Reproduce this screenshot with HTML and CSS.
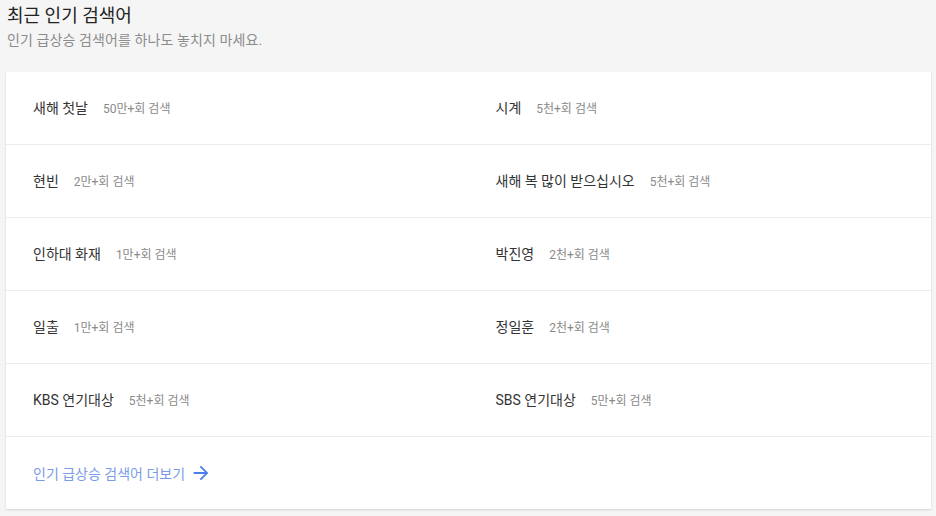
FILE: index.html
```html
<!DOCTYPE html>
<html lang="ko">
<head>
    <meta charset="UTF-8">
    <meta name="viewport" content="width=device-width, initial-scale=1.0">
    <title>최근 인기 검색어</title>
    <link rel="stylesheet" href="styles.css">
</head>
<body>
    <header class="page-head">
        <h1>최근 인기 검색어</h1>
        <p>인기 급상승 검색어를 하나도 놓치지 마세요.</p>
    </header>
    <section class="card">
        <ul class="trend-list">
            <li><span class="term">새해 첫날</span><span class="count">50만+회 검색</span></li>
            <li><span class="term">시계</span><span class="count">5천+회 검색</span></li>
            <li><span class="term">현빈</span><span class="count">2만+회 검색</span></li>
            <li><span class="term">새해 복 많이 받으십시오</span><span class="count">5천+회 검색</span></li>
            <li><span class="term">인하대 화재</span><span class="count">1만+회 검색</span></li>
            <li><span class="term">박진영</span><span class="count">2천+회 검색</span></li>
            <li><span class="term">일출</span><span class="count">1만+회 검색</span></li>
            <li><span class="term">정일훈</span><span class="count">2천+회 검색</span></li>
            <li><span class="term">KBS 연기대상</span><span class="count">5천+회 검색</span></li>
            <li><span class="term">SBS 연기대상</span><span class="count">5만+회 검색</span></li>
        </ul>
        <a class="more" href="#">인기 급상승 검색어 더보기
            <svg width="22" height="22" viewBox="0 0 24 24"><path d="M12 4l-1.41 1.41L16.17 11H4v2h12.17l-5.58 5.59L12 20l8-8z" fill="currentColor"/></svg>
        </a>
    </section>
</body>
</html>
```

FILE: styles.css
```css
body {
    font-family: Roboto, "Noto Sans CJK KR", sans-serif;
    margin: 0;
    padding: 0 5px 8px 6px;
    background-color: #f5f5f5;
}

.page-head {
    padding: 3px 1px 0;
    height: 69px;
}

.page-head h1 {
    margin: 0;
    font-size: 18px;
    font-weight: 400;
    color: #222;
    line-height: 26px;
}

.page-head p {
    margin: 0;
    font-size: 14px;
    letter-spacing: 0.1px;
    color: #8c8c8c;
    line-height: 22px;
}

.card {
    background-color: #fff;
    box-shadow: 0 1px 2px rgba(0, 0, 0, 0.15);
}

.trend-list {
    list-style: none;
    margin: 0;
    padding: 0;
    display: grid;
    grid-template-columns: 1fr 1fr;
}

.trend-list li {
    height: 70px;
    display: flex;
    align-items: center;
    padding-left: 27px;
    padding-bottom: 2px;
    border-bottom: 1px solid #ebebeb;
}

.term {
    font-size: 14px;
    color: #333;
    margin-right: 15px;
}

.count {
    font-size: 12px;
    color: #8a8a8a;
}

.more {
    display: flex;
    align-items: center;
    gap: 5px;
    height: 72px;
    padding-left: 27px;
    font-size: 14px;
    color: #7b9be8;
    text-decoration: none;
}

.more svg {
    color: #4a7ee8;
}
```
